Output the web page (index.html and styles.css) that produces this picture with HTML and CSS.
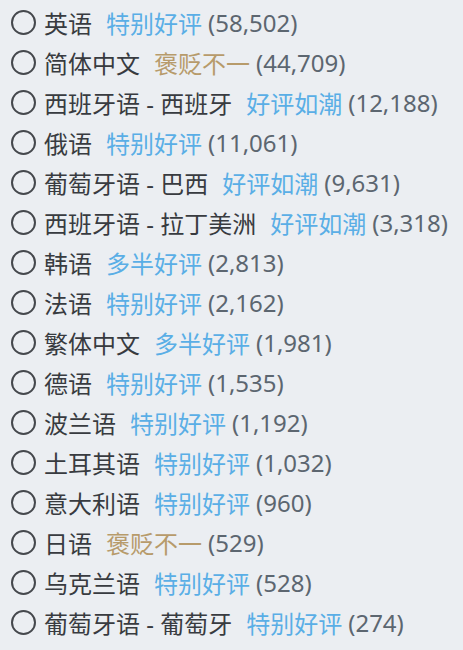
FILE: index.html
```html
<!DOCTYPE html>
<html lang="zh-CN">
<head>
  <meta charset="UTF-8">
  <meta name="viewport" content="width=device-width, initial-scale=1.0">
  <title>语言评测</title>
  <link rel="stylesheet" href="styles.css">
</head>
<body>
  <ul class="lang-list">
    <li class="lang-row"><span class="radio"></span><span class="name">英语</span><span class="rating positive">特别好评</span><span class="count">(58,502)</span></li>
    <li class="lang-row"><span class="radio"></span><span class="name">简体中文</span><span class="rating mixed">褒贬不一</span><span class="count">(44,709)</span></li>
    <li class="lang-row"><span class="radio"></span><span class="name">西班牙语 - 西班牙</span><span class="rating positive">好评如潮</span><span class="count">(12,188)</span></li>
    <li class="lang-row"><span class="radio"></span><span class="name">俄语</span><span class="rating positive">特别好评</span><span class="count">(11,061)</span></li>
    <li class="lang-row"><span class="radio"></span><span class="name">葡萄牙语 - 巴西</span><span class="rating positive">好评如潮</span><span class="count">(9,631)</span></li>
    <li class="lang-row"><span class="radio"></span><span class="name">西班牙语 - 拉丁美洲</span><span class="rating positive">好评如潮</span><span class="count">(3,318)</span></li>
    <li class="lang-row"><span class="radio"></span><span class="name">韩语</span><span class="rating positive">多半好评</span><span class="count">(2,813)</span></li>
    <li class="lang-row"><span class="radio"></span><span class="name">法语</span><span class="rating positive">特别好评</span><span class="count">(2,162)</span></li>
    <li class="lang-row"><span class="radio"></span><span class="name">繁体中文</span><span class="rating positive">多半好评</span><span class="count">(1,981)</span></li>
    <li class="lang-row"><span class="radio"></span><span class="name">德语</span><span class="rating positive">特别好评</span><span class="count">(1,535)</span></li>
    <li class="lang-row"><span class="radio"></span><span class="name">波兰语</span><span class="rating positive">特别好评</span><span class="count">(1,192)</span></li>
    <li class="lang-row"><span class="radio"></span><span class="name">土耳其语</span><span class="rating positive">特别好评</span><span class="count">(1,032)</span></li>
    <li class="lang-row"><span class="radio"></span><span class="name">意大利语</span><span class="rating positive">特别好评</span><span class="count">(960)</span></li>
    <li class="lang-row"><span class="radio"></span><span class="name">日语</span><span class="rating mixed">褒贬不一</span><span class="count">(529)</span></li>
    <li class="lang-row"><span class="radio"></span><span class="name">乌克兰语</span><span class="rating positive">特别好评</span><span class="count">(528)</span></li>
    <li class="lang-row"><span class="radio"></span><span class="name">葡萄牙语 - 葡萄牙</span><span class="rating positive">特别好评</span><span class="count">(274)</span></li>
  </ul>
</body>
</html>
```

FILE: styles.css
```css
body {
  margin: 0;
  background: #ebeef2;
  font-family: "Noto Sans", "Noto Sans CJK SC", sans-serif;
  font-size: 24px;
  color: #383b40;
}
.lang-list {
  list-style: none;
  margin: 0;
  padding: 2px 0 0 11px;
}
.lang-row {
  display: flex;
  align-items: center;
  height: 40px;
  white-space: nowrap;
}
.radio {
  flex: none;
  width: 21px;
  height: 21px;
  border: 2px solid #45484d;
  border-radius: 50%;
  margin-right: 8px;
}
.name {
  margin-right: 14px;
}
.rating {
  margin-right: 6px;
}
.positive {
  color: #5aaee6;
}
.mixed {
  color: #b79b6b;
}
.count {
  color: #5c6670;
}
```
